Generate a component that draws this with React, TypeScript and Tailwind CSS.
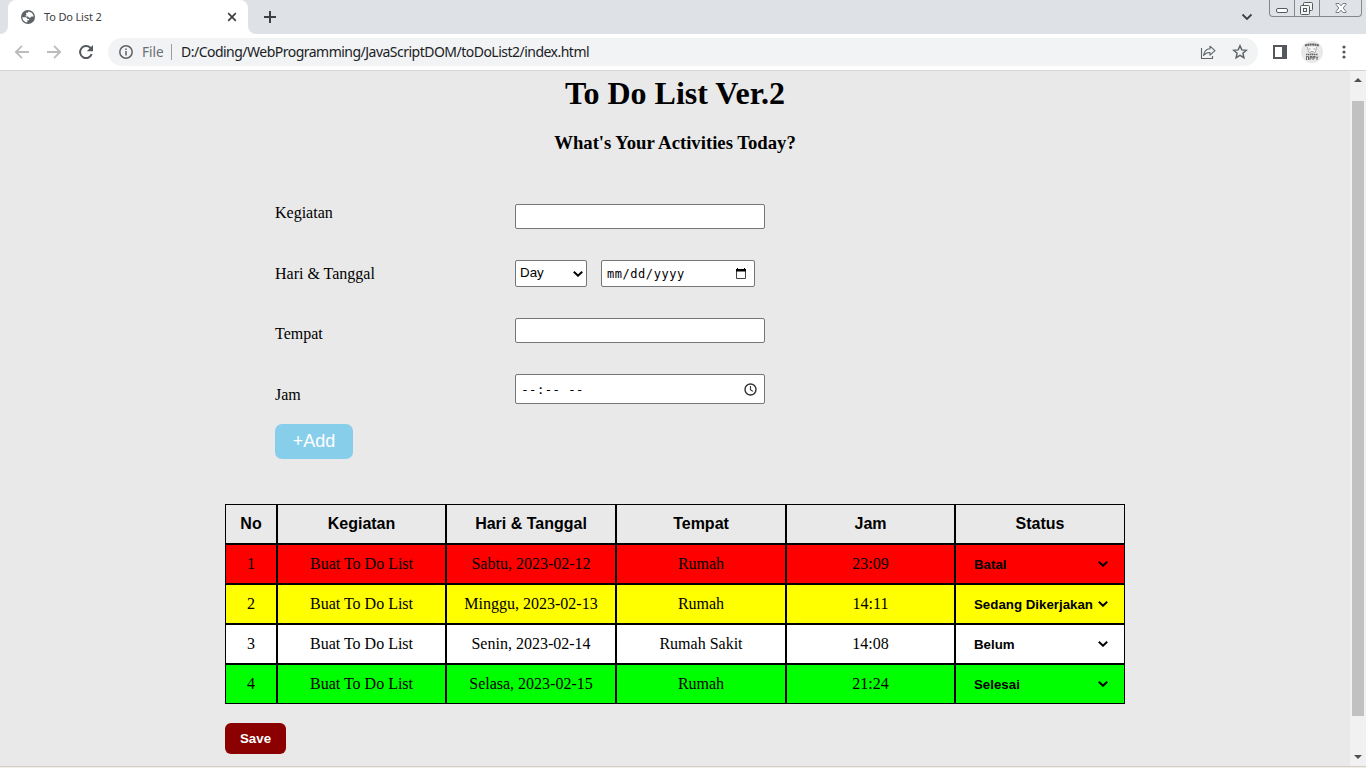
import React from "react";

const rows = [
  { no: 1, day: "Sabtu, 2023-02-12", place: "Rumah", time: "23:09", status: "Batal", color: "bg-[#ff0000]" },
  { no: 2, day: "Minggu, 2023-02-13", place: "Rumah", time: "14:11", status: "Sedang Dikerjakan", color: "bg-[#ffff00]" },
  { no: 3, day: "Senin, 2023-02-14", place: "Rumah Sakit", time: "14:08", status: "Belum", color: "bg-white" },
  { no: 4, day: "Selasa, 2023-02-15", place: "Rumah", time: "21:24", status: "Selesai", color: "bg-[#00ff00]" },
];

const gridCols = "grid grid-cols-[52px_169px_170px_170px_169px_170px]";

function Chevron() {
  return (
    <svg width="10" height="6" viewBox="0 0 10 6" fill="none" stroke="#000" strokeWidth="2" className="shrink-0">
      <path d="M0.8 0.8 L5 4.7 L9.2 0.8" />
    </svg>
  );
}

function TabStrip() {
  return (
    <div className="flex h-[34px] bg-[#dee1e6]">
      <div className="flex w-2 items-end bg-white">
        <div className="h-full w-2 rounded-br-lg bg-[#dee1e6]" />
      </div>
      <div className="flex w-[240px] items-center rounded-t-lg bg-white pl-3">
        <svg width="16" height="16" viewBox="0 0 16 16">
          <circle cx="8" cy="8" r="7" fill="#5f6368" />
          <path d="M2.3 8.2h3.2c1.3 0 1.8.8 1.8 1.7h1.8v1.4H7.3v2.2C4.3 13.2 2.3 11 2.3 8.2z" fill="#fff" />
          <path d="M6 5V3.8h2.2V2.4C11 2.5 13.4 4.8 13.6 7.6h-2.2c-.3 1.2-1.6 1.2-2.6.8L8 7.6H5.6V6.3L7 6.2z" fill="#fff" />
        </svg>
        <span className="ml-2 w-[180px] whitespace-nowrap font-['Noto_Sans',sans-serif] text-[11px] leading-4 tracking-[-0.15px] text-[#3c4043]">
          To Do List 2
        </span>
        <svg width="16" height="16" viewBox="0 0 16 16" stroke="#3c4043" strokeWidth="1.7">
          <path d="M4.2 4.2l7.6 7.6M11.8 4.2l-7.6 7.6" />
        </svg>
      </div>
      <div className="flex w-2 bg-white">
        <div className="h-full w-2 rounded-bl-lg bg-[#dee1e6]" />
      </div>
      <svg width="14" height="14" viewBox="0 0 14 14" stroke="#3c4043" strokeWidth="2" className="ml-[7px] mt-[10px]">
        <path d="M7 1v12M1 7h12" />
      </svg>
      <svg width="12" height="8" viewBox="0 0 12 8" fill="none" stroke="#3c4043" strokeWidth="1.8" className="ml-auto mt-[13px]">
        <path d="M1.500 1.500L6 6l4.500-4.500" />
      </svg>
      <div className="ml-4 mr-1 flex h-[17px] w-[93px] rounded-b-[4px] border border-t-0 border-[#84888d] bg-[#dfe2e7]">
        <div className="flex w-[25px] justify-center border-r border-[#84888d]">
          <svg width="14" height="16" viewBox="0 0 14 16">
            <rect x="1.5" y="8.5" width="11" height="4" rx="1.5" fill="#fff" stroke="#565a5f" />
          </svg>
        </div>
        <div className="flex w-[25px] justify-center border-r border-[#84888d]">
          <svg width="14" height="16" viewBox="0 0 14 16" fill="#f4f4f4" stroke="#565a5f">
            <rect x="3.5" y="2.5" width="9" height="8" rx="1" />
            <rect x="0.5" y="5.5" width="9" height="9" rx="1" />
            <rect x="3.5" y="8.5" width="3" height="3" />
          </svg>
        </div>
        <div className="flex flex-1 justify-center">
          <svg width="14" height="16" viewBox="0 0 14 16">
            <path d="M2 3.5h3l2 2.3 2-2.3h3v1L9.2 8l2.800 3.500v1H9l-2-2.300-2 2.300H2v-1L4.800 8 2 4.500z" fill="#fff" stroke="#6b6f74" strokeWidth=".9" />
          </svg>
        </div>
      </div>
    </div>
  );
}

function Toolbar() {
  return (
    <div className="flex h-9 items-center bg-white pl-[14px]">
      <svg width="16" height="16" viewBox="0 0 16 16" fill="none" stroke="#babcbe" strokeWidth="1.8">
        <path d="M15 8H2.5M8 1.8L1.8 8 8 14.2" />
      </svg>
      <svg width="16" height="16" viewBox="0 0 16 16" fill="none" stroke="#babcbe" strokeWidth="1.8" className="ml-4">
        <path d="M1 8h12.500M8 1.800L14.200 8 8 14.200" />
      </svg>
      <svg width="16" height="16" viewBox="0 0 16 16" fill="none" className="ml-4">
        <path d="M13.700 10.200A6 6 0 1 1 12.300 3.800L14 5.500" stroke="#54585d" strokeWidth="2" />
        <path d="M15 1v6.200H8.800z" fill="#54585d" />
      </svg>
      <div className="ml-[14px] flex h-7 w-[1150px] items-center rounded-full bg-[#f1f3f4] pl-[11px] pr-[10px]">
        <svg width="14" height="14" viewBox="0 0 14 14" fill="none" stroke="#5f6368" strokeWidth="1.5">
          <circle cx="7" cy="7" r="6.200" />
          <path d="M7 6v4.500M7 3.400v1.600" />
        </svg>
        <span className="ml-[9px] w-[22px] whitespace-nowrap font-['Noto_Sans',sans-serif] text-[13.500px] leading-5 text-[#6a6e73]">File</span>
        <div className="ml-[7px] h-4 w-px bg-[#9a9da1]" />
        <span className="ml-[9px] whitespace-nowrap font-['Noto_Sans',sans-serif] text-[14px] leading-5 tracking-[-0.515px] text-[#202124]">
          D:/Coding/WebProgramming/JavaScriptDOM/toDoList2/index.html
        </span>
        <svg width="16" height="16" viewBox="0 0 16 16" fill="none" stroke="#5f6368" strokeWidth="1.100" className="ml-auto">
          <path d="M1.500 4v10.500h11V12" />
          <path d="M10 2.200L15 6.700l-5 4.500V8.500C7 8.400 5 9.500 3.500 11.500 4 8 6 5 10 4.800z" strokeLinejoin="round" />
        </svg>
        <svg width="16" height="16" viewBox="0 0 16 16" fill="none" stroke="#5f6368" strokeWidth="1.500" className="ml-4">
          <path d="M8 1.800l1.800 4.100 4.500.4-3.400 3 1 4.400L8 11.400l-3.900 2.300 1-4.400-3.400-3 4.500-.4z" />
        </svg>
      </div>
      <svg width="14" height="14" viewBox="0 0 14 14" className="ml-[15px]">
        <path d="M0 0h14v14H0z" fill="#54585d" />
        <path d="M2 2h7v10H2z" fill="#fff" />
      </svg>
      <svg width="22" height="22" viewBox="0 0 22 22" className="ml-[14px]">
        <circle cx="11" cy="11" r="11" fill="#e9e9e9" />
        <g fill="none" stroke="#666">
          <path d="M4 4.500q7-2 14 0" strokeWidth="2.200" strokeDasharray="2 .4" />
          <path d="M6.500 6l1 5q3.500 3 7 0l1-5" strokeWidth=".5" fill="#f8f8f8" />
          <path d="M8 8h1.500M12.500 8H14M9.500 10.500h3" strokeWidth=".6" />
          <path d="M5 13.500h12" strokeWidth="1.500" strokeDasharray="1.500 .5" />
          <path d="M5.500 19v-3.500h2V19M9 19v-3.500h2V17H9M12 19v-3.500h2V17h-2M15 15.500l1 1.500 1-1.500M16 17v2" strokeWidth="1" />
        </g>
      </svg>
      <svg width="4" height="14" viewBox="0 0 4 14" fill="#54585d" className="ml-[19px]">
        <circle cx="2" cy="2" r="1.600" />
        <circle cx="2" cy="7" r="1.600" />
        <circle cx="2" cy="12" r="1.600" />
      </svg>
    </div>
  );
}

function FormArea() {
  const field = "rounded-[2px] border border-[#767676] bg-white";
  return (
    <div className="ml-[275px] grid w-[490px] grid-cols-[240px_250px] text-[16px] leading-[18px]">
      <div className="h-14">Kegiatan</div>
      <div className={`${field} h-[25px]`} />
      <div className="h-[58px] pt-[5px]">Hari &amp; Tanggal</div>
      <div className="flex">
        <div className={`${field} flex h-[27px] w-[72px] items-center justify-between pl-1 pr-[3px] font-['Liberation_Sans',sans-serif] text-[13.330px]`}>
          <span className="pb-px">Day</span>
          <Chevron />
        </div>
        <div className={`${field} ml-[14px] flex h-[27px] w-[154px] items-center justify-between pl-[5px] pr-[7px] font-['DejaVu_Sans_Mono',monospace] text-[12px]`}>
          <span className="pt-px tracking-[0.550px]">mm/dd/yyyy</span>
          <svg width="12" height="12" viewBox="0 0 12 12">
            <path d="M1.500 1.500h9v9h-9z" fill="none" stroke="#444" />
            <path d="M1 1h10v2.500H1zM2 0h1v1H2zM9 0h1v1H9z" />
          </svg>
        </div>
      </div>
      <div className="h-14 pt-[7px]">Tempat</div>
      <div className={`${field} h-[25px]`} />
      <div className="h-[50px] pt-3">Jam</div>
      <div className={`${field} flex h-[30px] items-center justify-between pl-[5px] pr-[7px] font-['DejaVu_Sans_Mono',monospace] text-[13px]`}>
        <span className="whitespace-pre pt-[2px]">--:-- --</span>
        <svg width="13" height="13" viewBox="0 0 13 13" fill="none" stroke="#333" strokeWidth="1.400">
          <circle cx="6.500" cy="6.500" r="5.500" />
          <path d="M6.500 3v3.700l2.400 1.700" strokeWidth="1.100" />
        </svg>
      </div>
      <button className="h-[35px] w-[78px] rounded-[7px] bg-[#87ceeb] pb-[2px] font-['Liberation_Sans',sans-serif] text-[18px] text-white">+Add</button>
    </div>
  );
}

function ActivityTable() {
  const cell = "flex h-10 items-center justify-center border border-black whitespace-nowrap";
  return (
    <div className="ml-[225px] w-[900px]">
      <div className={`${gridCols} font-['Liberation_Sans',sans-serif] text-[16px] font-bold`}>
        {["No", "Kegiatan", "Hari & Tanggal", "Tempat", "Jam", "Status"].map((h) => (
          <div key={h} className={cell}>{h}</div>
        ))}
      </div>
      {rows.map((r) => (
        <div key={r.no} className={`${gridCols} ${r.color} text-[16px]`}>
          <div className={cell}>{r.no}</div>
          <div className={cell}>Buat To Do List</div>
          <div className={cell}>{r.day}</div>
          <div className={cell}>{r.place}</div>
          <div className={cell}>{r.time}</div>
          <div className="flex h-10 items-center justify-between whitespace-nowrap border border-black pl-[18px] pr-4 font-['Liberation_Sans',sans-serif] text-[13.300px] font-bold">
            <span className="pt-[2px]">{r.status}</span>
            <Chevron />
          </div>
        </div>
      ))}
    </div>
  );
}

export default function App() {
  return (
    <div className="flex h-[768px] w-[1366px] flex-col overflow-hidden">
      <TabStrip />
      <Toolbar />
      <div className="flex h-[696px] border-t border-[#d5d5d5]">
        <main className="w-[1350px] bg-[#e9e9e9] font-['Liberation_Serif',serif] text-black">
          <h1 className="pt-1 text-center text-[32px] font-bold leading-[37px]">To Do List Ver.2</h1>
          <h3 className="mt-5 text-center text-[18.720px] font-bold leading-[21px]">What's Your Activities Today?</h3>
          <div className="mt-[51px]">
            <FormArea />
          </div>
          <div className="mt-[45px]">
            <ActivityTable />
          </div>
          <button className="ml-[225px] mt-[19px] block h-[31px] w-[61px] rounded-[6px] bg-[#8b0000] font-['Liberation_Sans',sans-serif] text-[13.300px] font-bold text-white">
            Save
          </button>
        </main>
        <div className="flex w-4 flex-col items-center bg-[#f1f1f1]">
          <svg width="8" height="4" viewBox="0 0 8 4" className="mt-[7px]" fill="#505050">
            <path d="M0 4L4 0l4 4z" />
          </svg>
          <div className="mt-[19px] h-[615px] w-3 bg-[#c1c1c1]" />
          <svg width="8" height="4" viewBox="0 0 8 4" className="mt-[39px]" fill="#505050">
            <path d="M0 0h8L4 4z" />
          </svg>
        </div>
      </div>
      <div className="h-px bg-[#d4d0c8]" />
      <div className="h-px bg-[#f0eee6]" />
    </div>
  );
}
